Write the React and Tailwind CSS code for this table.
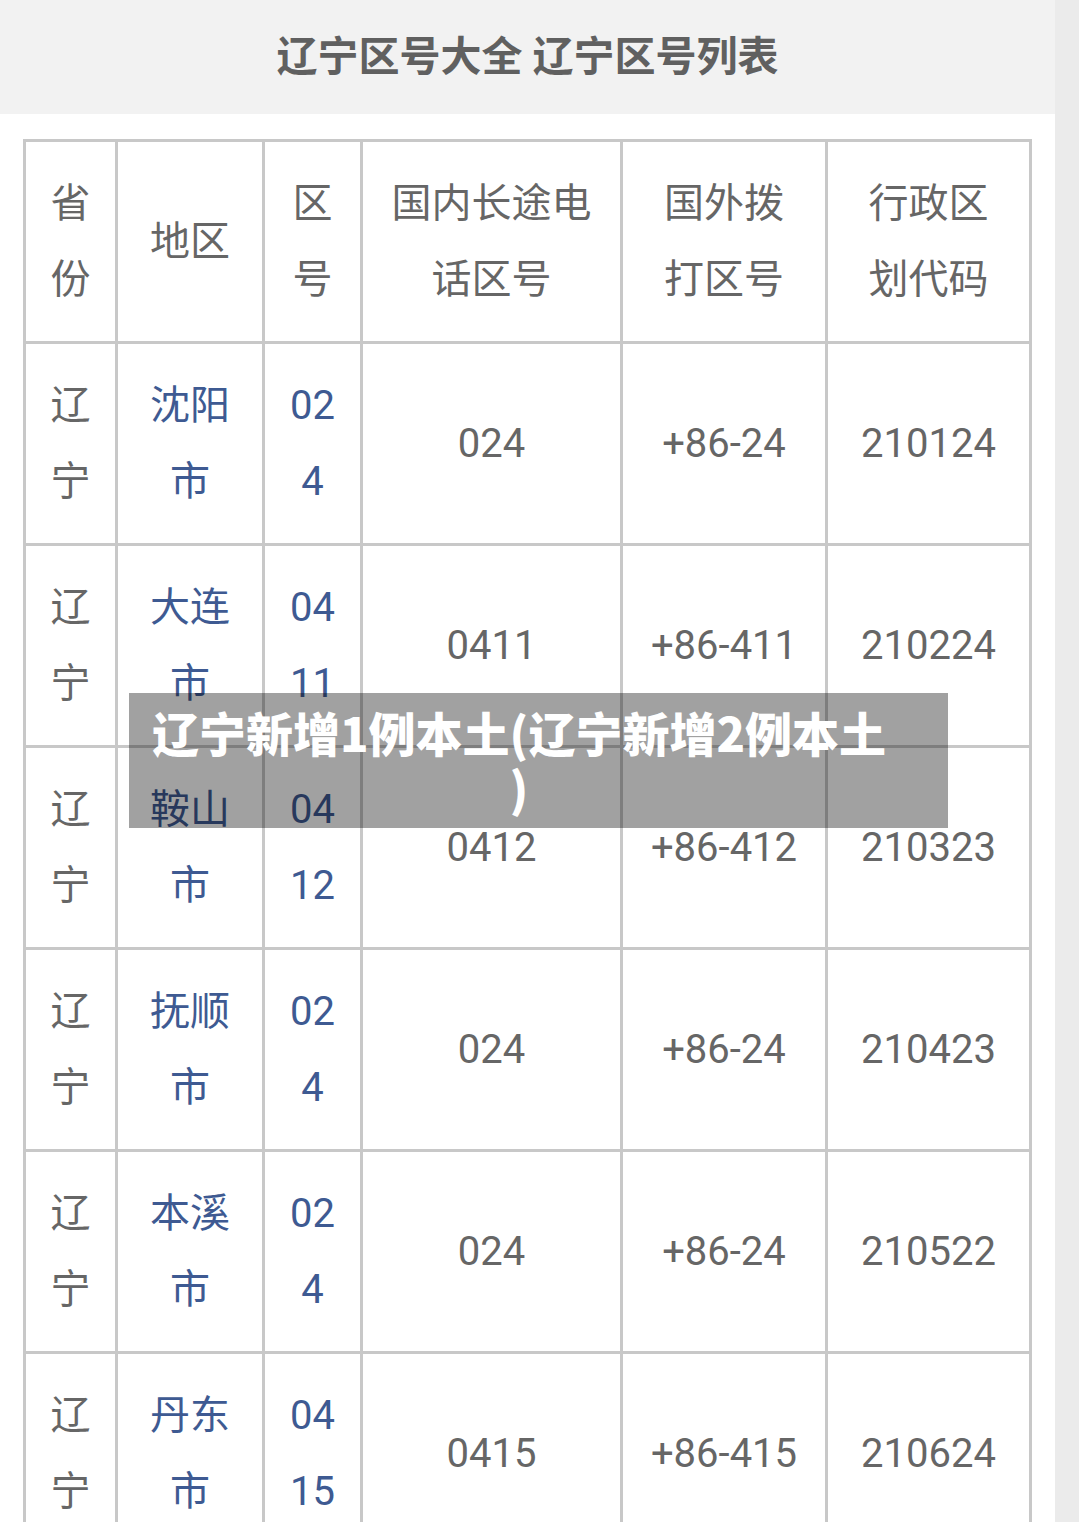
import React from 'react';

const columns = [
    { label: '省份', width: 'w-[92px]', pad: 'px-[20px]' },
    { label: '地区', width: 'w-[147px]', pad: 'px-[20px]' },
    { label: '区号', width: 'w-[98px]', pad: 'px-[20px]' },
    { label: '国内长途电话区号', width: 'w-[260px]', pad: 'px-[20px]' },
    { label: '国外拨打区号', width: 'w-[205px]', pad: 'px-[25px]' },
    { label: '行政区划代码', width: 'w-[204px]', pad: 'px-[25px]' },
];

const rows = [
    ['辽宁', '沈阳市', '024', '024', '+86-24', '210124'],
    ['辽宁', '大连市', '0411', '0411', '+86-411', '210224'],
    ['辽宁', '鞍山市', '0412', '0412', '+86-412', '210323'],
    ['辽宁', '抚顺市', '024', '024', '+86-24', '210423'],
    ['辽宁', '本溪市', '024', '024', '+86-24', '210522'],
    ['辽宁', '丹东市', '0415', '0415', '+86-415', '210624'],
];

export default function App() {
    return (
        <div className="relative flex min-h-screen bg-white font-['Roboto','Noto_Sans_CJK_SC',sans-serif]">
            <main className="w-[1055px] shrink-0">
                <header className="flex h-[114px] items-center justify-center bg-[#f2f2f2]">
                    <h1 className="text-[41px] font-bold leading-none text-[#606060]">辽宁区号大全 辽宁区号列表</h1>
                </header>

                <div className="px-[23px] pt-[25px]">
                    <table className="w-[1009px] table-fixed border-collapse border-[3px] border-[#c8c8c8] text-center text-[40px] leading-[76px] text-[#666]">
                        <colgroup>
                            {columns.map((col) => (
                                <col key={col.label} className={col.width} />
                            ))}
                        </colgroup>
                        <thead>
                            <tr>
                                {columns.map((col) => (
                                    <th key={col.label} className={`border-[3px] border-[#c8c8c8] py-[23.5px] font-normal break-all ${col.pad}`}>
                                        {col.label}
                                    </th>
                                ))}
                            </tr>
                        </thead>
                        <tbody>
                            {rows.map((row, i) => (
                                <tr key={i}>
                                    {row.map((cell, j) => (
                                        <td
                                            key={j}
                                            className={`border-[3px] border-[#c8c8c8] py-[23.5px] break-all ${columns[j].pad} ${j === 1 || j === 2 ? 'text-[#3e5a92]' : ''}`}
                                        >
                                            {cell}
                                        </td>
                                    ))}
                                </tr>
                            ))}
                        </tbody>
                    </table>
                </div>
            </main>
            <aside className="flex-1 bg-[#ebebeb]" />

            {/* Headline overlay */}
            <div className="absolute left-[129px] top-[693px] w-[819px] bg-[rgba(0,0,0,0.37)] pb-[14px] pt-[11px] pl-[20px] pr-[59px] text-center">
                <p className="font-['Noto_Sans_CJK_SC',sans-serif] text-[47px] font-black leading-[55px] text-white [line-break:anywhere]">
                    辽宁新增1例本土(辽宁新增2例本土)
                </p>
            </div>
        </div>
    );
}
